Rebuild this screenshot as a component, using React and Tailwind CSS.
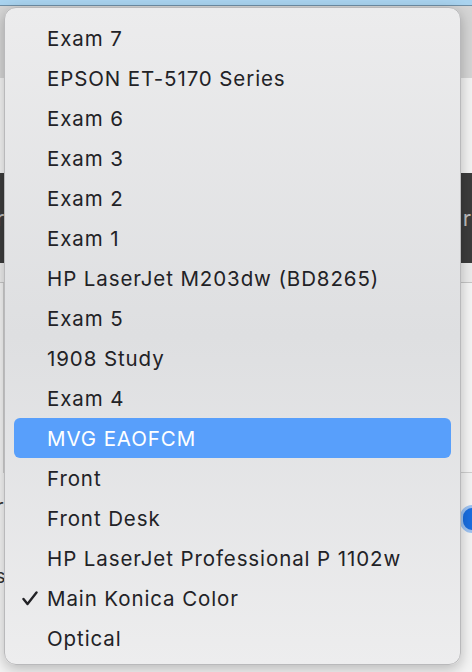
import React from 'react'

const printers = [
  'Exam 7',
  'EPSON ET-5170 Series',
  'Exam 6',
  'Exam 3',
  'Exam 2',
  'Exam 1',
  'HP LaserJet M203dw (BD8265)',
  'Exam 5',
  '1908 Study',
  'Exam 4',
  'MVG EAOFCM',
  'Front',
  'Front Desk',
  'HP LaserJet Professional P 1102w',
  'Main Konica Color',
  'Optical',
]

const highlighted = 'MVG EAOFCM'
const selected = 'Main Konica Color'

const Check = () => (
  <svg width="16" height="15" viewBox="0 0 16 15" fill="none" stroke="currentColor" strokeWidth="2.4" strokeLinecap="round" strokeLinejoin="round">
    <polyline points="1.5 8 5.5 13 14.5 1.5" />
  </svg>
)

export default function App() {
  return (
    <div
      className="relative w-[472px] h-[672px] overflow-hidden bg-[#f4f4f4]"
      style={{ fontFamily: 'Inter, "Noto Sans", sans-serif' }}
    >
      {/* Window behind the menu */}
      <div className="flex flex-col">
        <div className="h-[6px] bg-[#a9d3ef] border-b border-[#6f8fa6]" />
        <div className="h-[72px] bg-[#d5d5d5]" />
        <div className="h-[95px] bg-[#f3f3f3]" />
        <div className="h-[90px] bg-[#3c3c3c] flex items-center justify-between text-[#bdbdbd] text-[22px]">
          <span className="-ml-[4px]">r</span>
          <span className="mr-[1px]">r</span>
        </div>
        <div className="h-[20px] bg-[#ececec] border-b border-[#c6c6c6]" />
        <div className="h-[190px] bg-[#f5f5f5] border-l border-[#cfcfcf] ml-[3px] border-b" />
        <div className="relative h-[200px] bg-[#f4f4f4] text-[#333] text-[20px]">
          <span className="absolute left-[-4px] top-[18px]">r</span>
          <span className="absolute left-[-5px] top-[88px]">s</span>
          <div className="absolute right-[-12px] top-[32px] w-[24px] h-[28px] rounded-full bg-[#1a6ee0] border-[3px] border-[#9ec3f2]" />
        </div>
      </div>

      {/* Popup menu */}
      <div className="absolute left-[4px] top-[7px] w-[457px] h-[658px] rounded-[12px] border border-[#b9b9bb] shadow-[0_4px_14px_rgba(0,0,0,0.25)] bg-gradient-to-b from-[#ececed] via-[#dedfe1] to-[#ededee] pt-[10px]">
        {printers.map((name) => {
          const isHi = name === highlighted
          return (
            <div key={name} className="px-[9px]">
              <div
                className={`h-[40px] flex items-center rounded-[6px] ${
                  isHi ? 'bg-[#589ffb] text-white' : 'text-[#222226]'
                }`}
              >
                <span className="w-[33px] flex justify-end pr-[9px]">
                  {name === selected && <Check />}
                </span>
                <span className="text-[20.5px] leading-none tracking-[0.9px] pt-[2px]">{name}</span>
              </div>
            </div>
          )
        })}
      </div>
    </div>
  )
}
